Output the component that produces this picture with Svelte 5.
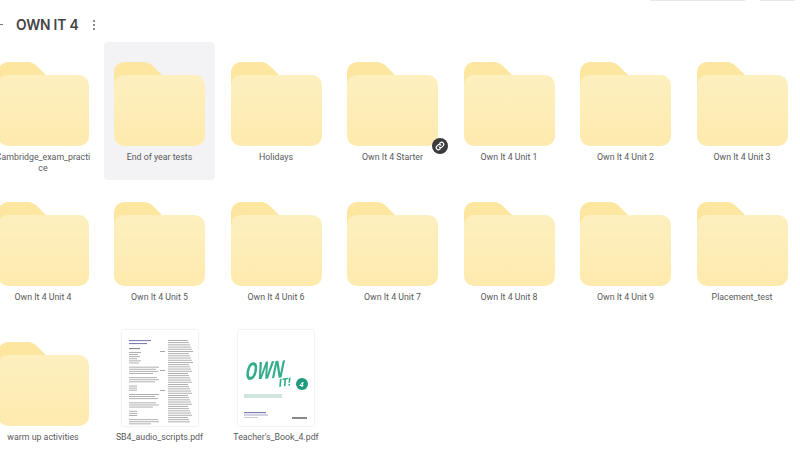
<script>
  const folders = [
    'Cambridge_exam_practice', 'End of year tests', 'Holidays', 'Own It 4 Starter',
    'Own It 4 Unit 1', 'Own It 4 Unit 2', 'Own It 4 Unit 3', 'Own It 4 Unit 4',
    'Own It 4 Unit 5', 'Own It 4 Unit 6', 'Own It 4 Unit 7', 'Own It 4 Unit 8',
    'Own It 4 Unit 9', 'Placement_test', 'warm up activities'
  ];

  // text lines of the two columns on the scripts page thumbnail
  const leftWidths = [12, 9, 11, 8, 12, 10, 0, 30, 27, 29, 24, 0, 28, 30, 26, 0, 8, 8, 8, 0, 30, 26, 29, 0, 27, 30, 24, 0, 8, 8, 8, 0, 29, 30, 22];
  const leftLines = leftWidths.map((w, i) => ({ y: 22 + i * 2.1, w }));
  const rightLines = [];
  for (let y = 10; y < 92; y += 2.2) {
    rightLines.push({ y, w: 20 + ((y * 5) % 5) });
  }
</script>

<div class="page">
  <div class="toptabs">
    <span class="tab wide"></span>
    <span class="tab"></span>
  </div>

  <header>
    <span class="back"></span>
    <h1>OWN IT 4</h1>
    <svg class="dots" width="4" height="12" viewBox="0 0 4 12">
      <circle cx="2" cy="2" r="1" />
      <circle cx="2" cy="6" r="1" />
      <circle cx="2" cy="10" r="1" />
    </svg>
  </header>

  <div class="grid">
    {#each folders as name, i}
      <div class="tile" class:selected={i === 1}>
        <div class="folder">
          <svg width="91" height="84" viewBox="0 0 91 84">
            <defs>
              <linearGradient id="front{i}" x1="0" y1="0" x2="0" y2="1">
                <stop offset="0" stop-color="#fdf0bf" />
                <stop offset="1" stop-color="#feeaae" />
              </linearGradient>
            </defs>
            <path d="M0 30V10a10 10 0 0 1 10-10h19c5 0 8 2 11 5l9 9v16H0z" fill="#fde6a0" />
            <rect y="13" width="91" height="71" rx="10" fill="url(#front{i})" />
          </svg>
          {#if i === 3}
            <span class="badge">
              <svg width="10" height="10" viewBox="0 0 24 24" fill="none" stroke="#fff" stroke-width="3" stroke-linecap="round">
                <path d="M10 14a5 5 0 0 0 7 0l3-3a5 5 0 0 0-7-7l-1.5 1.5" />
                <path d="M14 10a5 5 0 0 0-7 0l-3 3a5 5 0 0 0 7 7l1.5-1.5" />
              </svg>
            </span>
          {/if}
        </div>
        <div class="label">{name}</div>
      </div>
    {/each}

    <div class="tile">
      <div class="thumb">
        <svg width="76" height="96" viewBox="0 0 76 96">
          <g fill="#7d80b5">
            <rect x="7" y="10" width="22" height="1.1" />
            <rect x="7" y="13" width="18" height="1.1" />
            <rect x="7" y="18" width="11" height="1.1" fill="#888" />
          </g>
          <g fill="#a8a8a8">
            {#each leftLines as line}
              <rect x="7" y={line.y} width={line.w} height="0.9" />
            {/each}
            {#each rightLines as line}
              <rect x="46" y={line.y} width={line.w} height="0.9" />
            {/each}
            <rect x="38" y="21" width="5" height="1" />
            <rect x="38" y="40" width="5" height="1" />
            <rect x="38" y="60" width="5" height="1" />
          </g>
        </svg>
      </div>
      <div class="label">SB4_audio_scripts.pdf</div>
    </div>

    <div class="tile">
      <div class="thumb">
        <svg width="76" height="96" viewBox="0 0 76 96">
          <g class="cover" fill="#35ad8d">
            <text font-size="19" transform="translate(7 50) rotate(-4) skewX(-8) scale(0.86 1.25)">OWN</text>
            <text font-size="11" transform="translate(41 57) rotate(-8)">IT!</text>
            <circle cx="64" cy="54" r="6" fill="#1f9a7c" />
            <text x="61.5" y="57" font-size="7.5" fill="#fff">4</text>
          </g>
          <rect x="6" y="64" width="38" height="4" fill="#cfe6e0" />
          <rect x="6" y="82" width="22" height="1.2" fill="#7d80b5" />
          <rect x="6" y="84.5" width="24" height="1" fill="#a8a8c4" />
          <rect x="6" y="87" width="14" height="1" fill="#ccc" />
          <rect x="54" y="87" width="15" height="2" fill="#888" />
        </svg>
      </div>
      <div class="label">Teacher's_Book_4.pdf</div>
    </div>
  </div>
</div>

<style>
  :global(body) {
    margin: 0;
    background: #fff;
  }

  .page {
    width: 800px;
    height: 450px;
    overflow: hidden;
    position: relative;
    font-family: Roboto, "Liberation Sans", sans-serif;
    color: #555;
  }

  .toptabs {
    display: flex;
    justify-content: flex-end;
    gap: 15px;
    padding-right: 5px;
    height: 1px;
  }

  .tab {
    width: 35px;
    height: 1px;
    background: #e8e8e8;
  }

  .tab.wide {
    width: 95px;
  }

  header {
    display: flex;
    align-items: center;
    height: 47px;
    margin-bottom: -6px;
  }

  .back {
    width: 3px;
    height: 1px;
    background: #777;
  }

  h1 {
    margin: 0 0 0 13px;
    font-size: 13.8px;
    font-weight: 600;
    font-family: Inter, Roboto, sans-serif;
    letter-spacing: -0.2px;
    color: #444446;
  }

  .dots {
    margin-left: 14px;
    fill: #666;
  }

  .grid {
    display: grid;
    grid-template-columns: repeat(7, 111px);
    grid-auto-rows: 138px;
    column-gap: 5.5px;
    row-gap: 2px;
    margin-left: -12.5px;
  }

  .tile {
    display: flex;
    flex-direction: column;
    align-items: center;
    padding-top: 20px;
    box-sizing: border-box;
    border-radius: 4px;
  }

  .tile.selected {
    background: #f3f3f6;
  }

  .folder {
    position: relative;
    height: 84px;
  }

  .folder svg {
    display: block;
  }

  .badge {
    position: absolute;
    right: -10px;
    bottom: -8px;
    width: 16px;
    height: 16px;
    border-radius: 50%;
    background: #3b3b3e;
    display: flex;
    align-items: center;
    justify-content: center;
  }

  .badge svg {
    display: block;
  }

  .thumb {
    width: 76px;
    height: 96px;
    margin-top: -12px;
    background: #fff;
    box-shadow: 0 0 2px rgba(0, 0, 0, 0.14);
    filter: blur(0.4px);
  }

  .thumb svg {
    display: block;
  }

  .cover text {
    font-family: "Open Sans", sans-serif;
    font-weight: 700;
    font-style: italic;
  }

  .label {
    width: 96px;
    margin-top: 6px;
    font-size: 8.8px;
    line-height: 11px;
    text-align: center;
    overflow-wrap: anywhere;
    color: #5a5a5c;
  }
</style>
